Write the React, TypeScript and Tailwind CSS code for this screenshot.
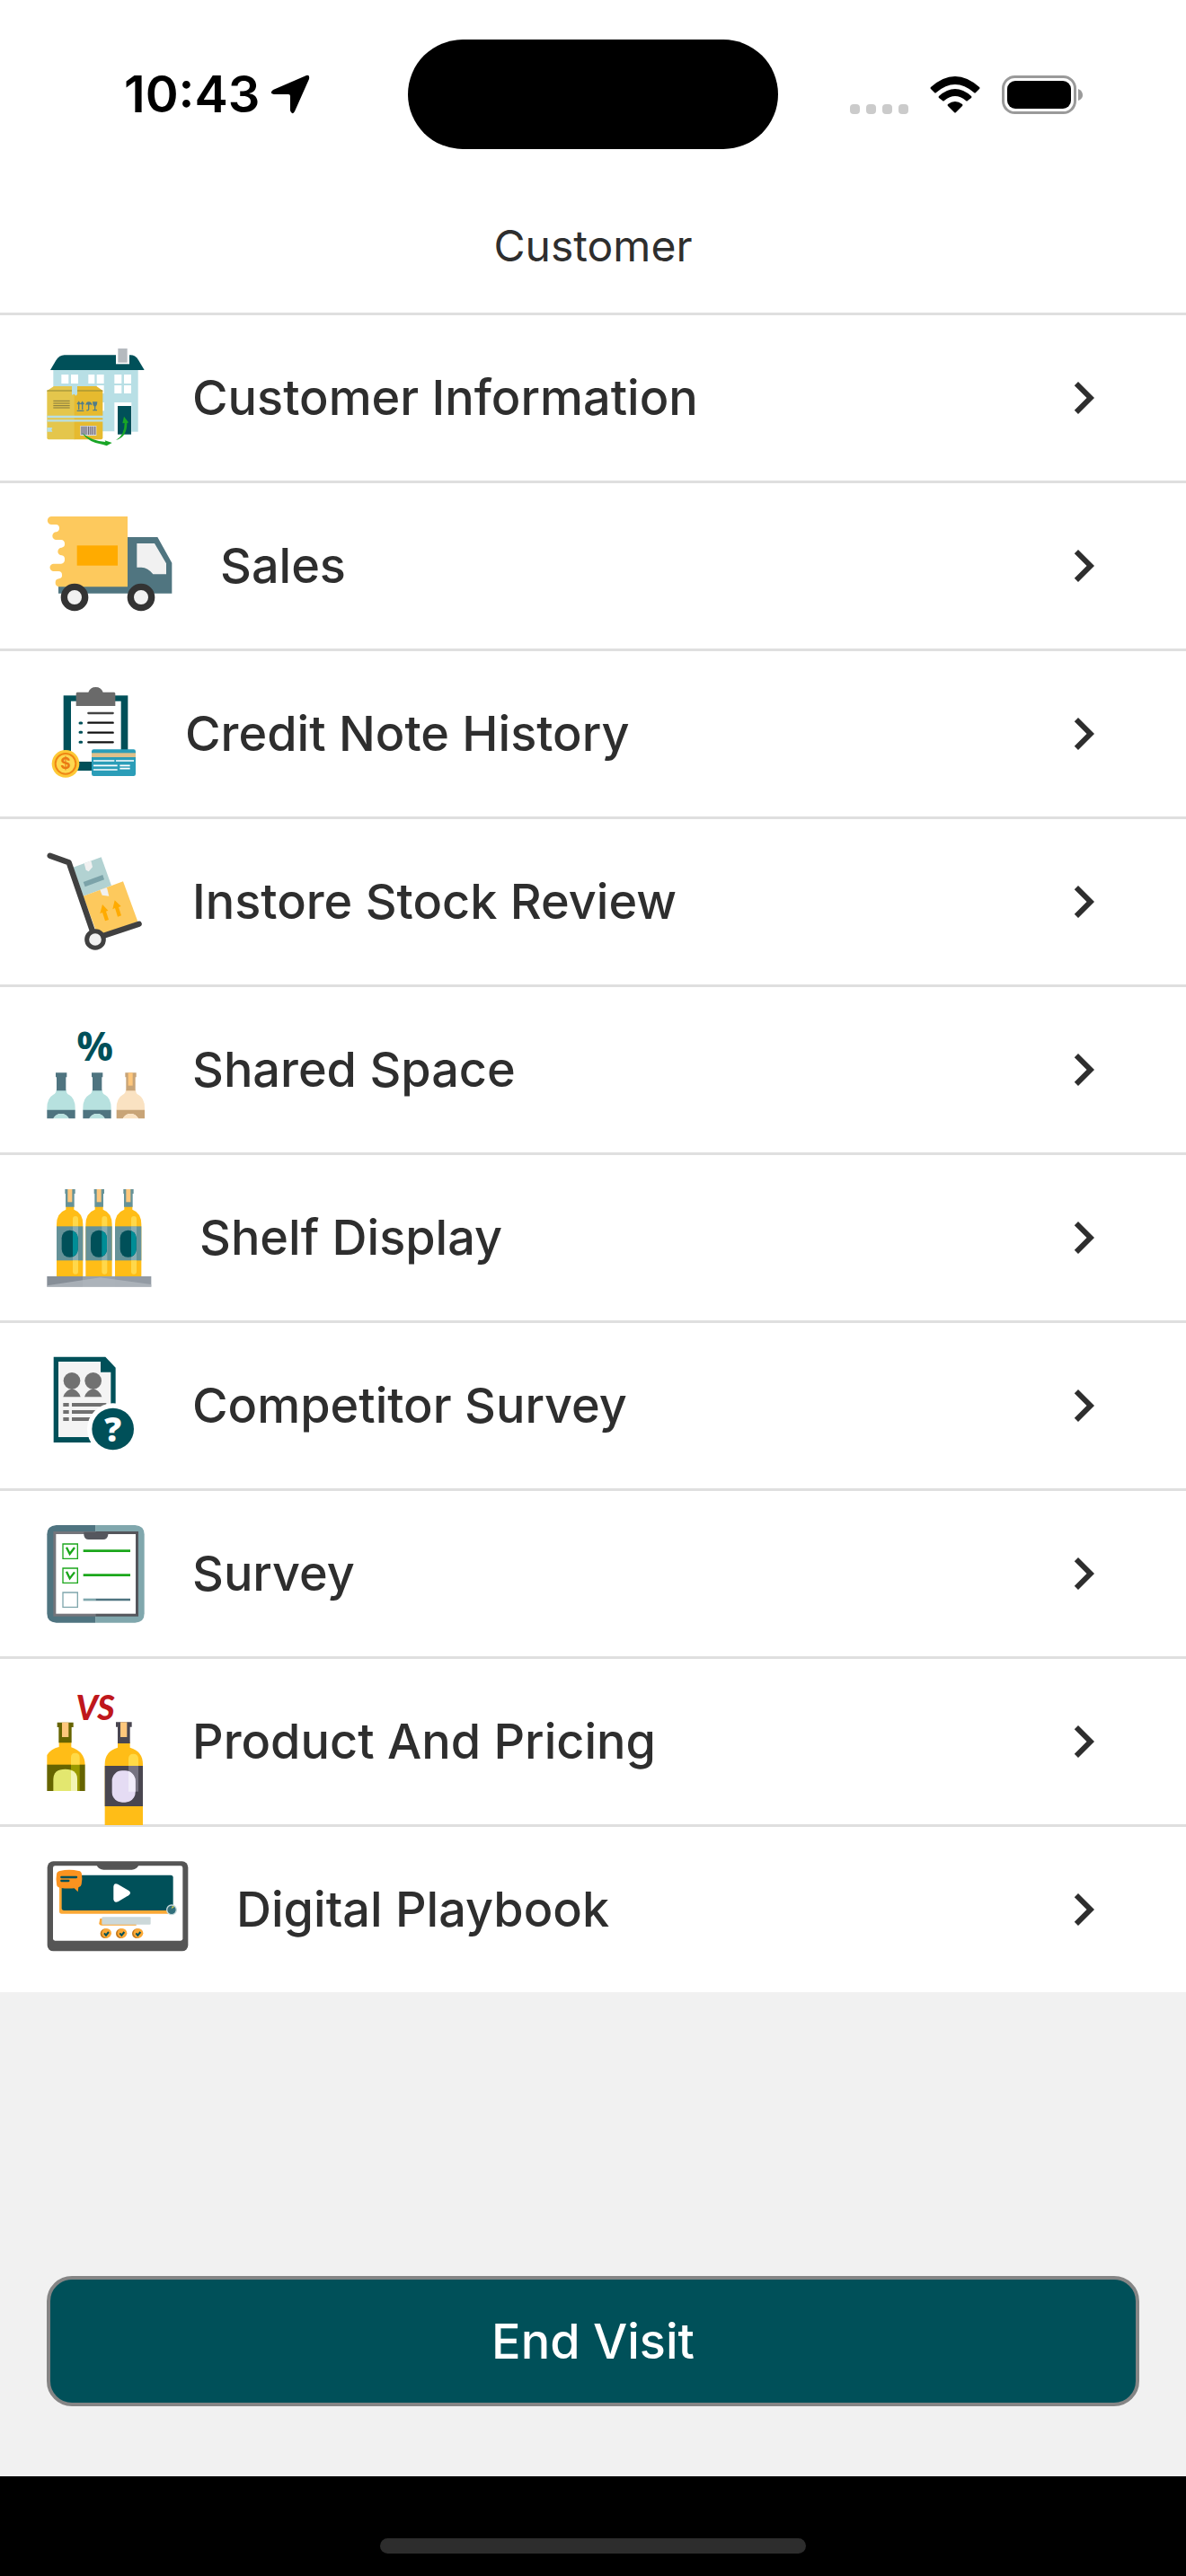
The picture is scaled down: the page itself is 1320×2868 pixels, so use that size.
import React, { type ReactNode } from "react";

const TEAL = "#005059";

/* ---------- Row pictograms ---------- */

function Pictogram({ viewBox, className, children }: { viewBox: string; className: string; children: ReactNode }) {
  return (
    <svg viewBox={viewBox} className={`h-28 shrink-0 overflow-visible ${className}`} aria-hidden="true">
      {children}
    </svg>
  );
}

function StoreIcon() {
  const panes = [
    [85, 141], [117, 141], [175, 141], [203, 141], [262, 141], [294, 141],
    [203, 177], [262, 177], [294, 177],
  ];
  return (
    <Pictogram viewBox="36 51 324 336" className="w-[108px]">
      <rect x="58" y="124" width="283" height="208" fill="#b8dfe5" />
      <path d="M48 126 L66 95 Q78 76 95 76 H315 Q332 76 342 92 L362 126Z" fill={TEAL} />
      <rect x="267" y="52" width="45" height="54" fill="#fff" />
      <rect x="274" y="54" width="31" height="47" fill="#b5babf" />
      {panes.map(([x, y]) => (
        <rect key={`${x}-${y}`} x={x} y={y} width={x < 200 && x > 170 ? 21 : 24} height={y === 141 ? 30 : 27} fill="#fff" />
      ))}
      <path d="M203 234 H228 V262 H203Z" fill="#fff" />
      <path d="M262 234 H319 V342 H262Z" fill="#fff" />
      <rect x="222" y="331" width="40" height="14" fill="#fff" />
      <rect x="273" y="246" width="45" height="95" fill={TEAL} />
      <path d="M37 195 L60 180 H130 V358 H42 Q37 358 37 352Z" fill="#e4c64c" />
      <path d="M128 180 H202 L223 195 V352 Q223 358 217 358 H128Z" fill="#e6ba2f" />
      <path d="M37 195 H223" stroke="#8f8634" strokeWidth="3" />
      <path d="M120 179 H138 V207 L133 212 L128 206 L120 209Z" fill="#b8dfe5" />
      <path d="M37 282 H228 M37 295 H228" stroke="#b8dfe5" strokeWidth="7" />
      <path d="M37 318 H55 L52 325 L55 332 H37Z" fill="#b8dfe5" />
      <path d="M58 229 H113 M58 237 H113 M58 245 H113 M58 252 H113" stroke="#81773e" strokeWidth="3" />
      <g stroke="#527d88" strokeWidth="4" fill="none">
        <path d="M143 235 V258 M155 235 V258 M137 262 H160 M138 240 L143 233 L148 240 M150 240 L155 233 L160 240" />
        <path d="M176 236 V257 Q175 262 169 260" />
        <path d="M197 246 V259 M190 260 H204" />
      </g>
      <path d="M166 244 Q167 232 176 232 Q187 232 187 244 L181 241 L176 244 L171 241Z M189 232 H205 Q204 248 197 248 Q190 248 189 232Z" fill="#527d88" />
      <rect x="148" y="312" width="54" height="33" fill="#d9dde4" />
      <path d="M150 314 H172 V342 H150Z" fill="#9393a2" />
      <path d="M176 314 V342 M183 314 V342 M190 314 V342 M197 314 V342" stroke="#6f6674" strokeWidth="4" />
      <path d="M153 335 Q185 362 232 366 L230 361 L254 369 L236 379 L224 375 Q176 368 153 335Z" fill="#18a526" />
      <path d="M267 360 Q296 344 296 303 L289 304 L294 281 L309 301 L304 304 Q304 350 267 360Z" fill="#18a526" />
    </Pictogram>
  );
}

function TruckIcon() {
  return (
    <Pictogram viewBox="36 42 417 336" className="w-[139px]">
      <path d="M75 270 H306 V114 H406 L454 200 V302 H75Z" fill="#507580" />
      <path
        d="M306 45 H52 A13 13 0 0 0 52 72 H66 A12 12 0 0 1 78 84 A13 13 0 0 1 68 97 A13 13 0 0 0 68 123 H84 A12 12 0 0 1 96 136 A12 12 0 0 1 86 149 A13 13 0 0 0 86 175 A13 13 0 0 1 96 189 A13 13 0 0 1 84 203 H59 A12 12 0 0 0 59 228 H75 A12 12 0 0 1 87 240 A12 12 0 0 1 77 253 A13 13 0 0 0 65 266 A13 13 0 0 0 78 280 H306Z"
        fill="#fdc95d"
      />
      <rect x="137" y="142" width="136" height="67" fill="#ffab00" />
      <path d="M337 135 H396 L435 202 V238 H391 Q374 215 352 215 H337Z" fill="#f1f1f1" />
      <circle cx="129" cy="315" r="35" fill="#f1f1f1" stroke="#333" strokeWidth="22" />
      <circle cx="351" cy="315" r="35" fill="#f1f1f1" stroke="#333" strokeWidth="22" />
    </Pictogram>
  );
}

function ClipboardCardIcon() {
  return (
    <Pictogram viewBox="36 33 300 336" className="w-[100px]">
      <rect x="92" y="73" width="215" height="251" fill={TEAL} />
      <rect x="117" y="92" width="167" height="202" fill="#fff" />
      <path d="M138 62 H175 A26 26 0 0 1 224 62 H261 Q265 62 265 67 V108 H134 V67 Q134 62 138 62Z" fill="#6a6a6a" />
      <path d="M175 132 H257" stroke="#444" strokeWidth="7" strokeLinecap="round" />
      <path d="M175 164 H257 M175 197 H257 M175 229 H257" stroke="#111" strokeWidth="7" strokeLinecap="round" />
      <path d="M147 165 H152 M147 196 H152 M147 229 H152" stroke={TEAL} strokeWidth="9" strokeLinecap="round" />
      <rect x="186" y="253" width="147" height="89" rx="7" fill="#2b9db8" />
      <rect x="186" y="265" width="147" height="14" fill="#dfc08a" />
      <path d="M192 291 H262 M267 291 H327 M192 307 H272 M192 321 H272 M280 307 H314 M280 317 H314" stroke="#fff" strokeWidth="5" />
      <circle cx="99" cy="301" r="46" fill="#fdc936" />
      <circle cx="99" cy="301" r="34" fill="#fdd850" stroke="#ef8614" strokeWidth="6" />
      <text x="99" y="319" fontSize="52" fontWeight="700" textAnchor="middle" fill="#ea7a13" fontFamily="Inter, sans-serif">$</text>
    </Pictogram>
  );
}

function TrolleyIcon() {
  return (
    <Pictogram viewBox="36 39 324 336" className="w-[108px]">
      <path d="M124 92 L218 58 L252 153 L159 188Z" fill="#b2d2d2" />
      <path d="M161 79 L184 70 L189 91 L176 106 L167 101Z" fill="#f1f1f1" />
      <path d="M158 141 L223 117 L228 133 L164 157Z" fill="#7ba3a9" />
      <path d="M158 188 L291 139 L340 273 L207 322Z" fill="#fdc95d" />
      <path d="M214 167 L237 160 L244 188 L221 185Z" fill="#f1f1f1" />
      <path d="M222 216 L241 236 L234 239 L243 267 L231 271 L222 243 L214 246Z M263 202 L284 222 L276 225 L285 253 L273 257 L264 228 L256 232Z" fill="#ffab00" />
      <path d="M47 53 L110 76 L188 302 M224 321 L344 281" fill="none" stroke="#404040" strokeWidth="19" strokeLinecap="round" strokeLinejoin="round" />
      <circle cx="198" cy="333" r="28" fill="#f1f1f1" stroke="#404040" strokeWidth="15" />
    </Pictogram>
  );
}

function RoundBottle({ x, glass, dark, cork }: { x: number; glass: string; dark: string; cork?: string }) {
  return (
    <g transform={`translate(${x} 0)`}>
      <path d="M31 265 H64 Q64 279 74 282 Q94 293 94 326 V334 H0 V326 Q0 293 20 282 Q31 277 31 265Z" fill={glass} />
      <path d="M29 208 H66 V223 H63 V268 H32 V223 H29Z" fill={dark} />
      {cork && <rect x="39" y="208" width="15" height="43" fill={cork} />}
      <path d="M0 332 H94 V361 H73 Q64 345 47 345 Q30 345 21 361 H0Z" fill={dark} />
      <path d="M21 361 Q30 345 47 345 Q64 345 73 361Z" fill={glass} />
    </g>
  );
}

function ShareIcon() {
  return (
    <Pictogram viewBox="36 30 324 336" className="w-[108px]">
      <text x="197" y="167" fontSize="136" fontWeight="700" textAnchor="middle" fill={TEAL} fontFamily="'Open Sans', sans-serif">%</text>
      <RoundBottle x={37} glass="#b7e1df" dark="#4f7480" />
      <RoundBottle x={157} glass="#b7e1df" dark="#4f7480" />
      <RoundBottle x={269} glass="#fae2c2" dark="#c8a477" cork="#fec77c" />
    </Pictogram>
  );
}

function ShelfIcon() {
  return (
    <Pictogram viewBox="36 36 348 336" className="w-[116px]">
      {[69, 166, 264].map((x) => (
        <g key={x} transform={`translate(${x} 0)`}>
          <path d="M31 98 H58 V110 Q88 121 88 160 V334 H0 V160 Q0 121 31 110Z" fill="#ffbd17" />
          <path d="M28 42 H62 V57 H59 V101 H30 V57 H28Z" fill="#659298" />
          <rect x="37" y="42" width="15" height="43" fill="#fec77c" />
          <rect x="0" y="166" width="88" height="114" fill="#659298" />
          <rect x="54" y="166" width="18" height="114" fill="#8aadb3" />
          <rect x="17" y="179" width="54" height="90" rx="26" fill={TEAL} />
          <path d="M54 181 Q71 188 71 206 V242 Q71 260 54 267Z" fill="#008d96" />
          <path d="M54 166 V142 Q54 132 63 132 Q72 132 72 142 V166Z M54 280 V317 Q54 326 63 326 Q72 326 72 317 V280Z" fill="#ffd84a" />
        </g>
      ))}
      <rect x="37" y="333" width="119" height="35" fill="#868e97" />
      <rect x="156" y="333" width="108" height="35" fill="#99a1a9" />
      <rect x="264" y="333" width="121" height="35" fill="#939ba4" />
      <path d="M37 364 L215 337 L385 360 V368 H37Z" fill="#b3b9c0" opacity="0.75" />
    </Pictogram>
  );
}

function CompetitorIcon() {
  return (
    <Pictogram viewBox="36 27 324 336" className="w-[108px]">
      <path d="M59 32 H232 L266 68 V318 H59Z" fill={TEAL} />
      <path d="M75 48 H216 V83 H250 V300 H75Z" fill="#f4f4f4" />
      {[120, 191].map((x) => (
        <g key={x} fill="#717171">
          <circle cx={x} cy="112" r="28" />
          <path d={`M${x - 29} 166 Q${x - 24} 145 ${x} 138 Q${x + 24} 145 ${x + 29} 166Z`} />
        </g>
      ))}
      <path d="M91 192 H110 M120 192 H235 M91 216 H110 M120 216 H205 M91 240 H110 M120 240 H195" stroke="#707070" strokeWidth="12" />
      <circle cx="257" cy="273" r="86" fill="#fff" />
      <circle cx="257" cy="273" r="70" fill={TEAL} />
      <text x="257" y="315" fontSize="112" fontWeight="800" textAnchor="middle" fill="#fff" fontFamily="'Open Sans', sans-serif">?</text>
    </Pictogram>
  );
}

function SurveyIcon() {
  return (
    <Pictogram viewBox="36 33 324 336" className="w-[108px]">
      <path d="M199 39 H331 Q362 41 362 70 V334 Q362 364 331 365 H199Z" fill="#80a7ad" />
      <path d="M199 39 H68 Q37 41 37 70 V334 Q37 364 68 365 H199Z" fill="#4f7480" />
      <rect x="58" y="60" width="141" height="284" fill="#74757b" />
      <rect x="199" y="60" width="143" height="284" fill="#54555b" />
      <rect x="67" y="69" width="266" height="266" fill="#fff" />
      <path d="M160 62 H241 V72 Q238 87 225 87 H176 Q162 87 160 72Z" fill="#55575e" />
      <g fill="none" stroke="#1ba71b">
        <path d="M90 102 H139 V151 H90Z M90 183 H139 V232 H90Z" strokeWidth="4" />
        <path d="M102 113 L113 135 L129 114 M102 194 L113 217 L129 196" strokeWidth="7" />
        <path d="M158 125 H315 M158 206 H315" strokeWidth="8" />
      </g>
      <path d="M90 264 H139 V313 H90Z" fill="none" stroke="#80a7ad" strokeWidth="4" />
      <path d="M158 288 H199" stroke="#80a7ad" strokeWidth="8" />
      <path d="M199 288 H315" stroke="#4f7480" strokeWidth="8" />
    </Pictogram>
  );
}

function VersusIcon() {
  return (
    <Pictogram viewBox="36 39 324 336" className="w-[108px]">
      <text x="198" y="134" fontSize="112" fontWeight="900" fontStyle="italic" textAnchor="middle" fill="#bf171c" fontFamily="Lato, sans-serif">VS</text>
      <path d="M77 210 H118 V226 Q164 242 164 285 H37 V252 Q50 231 77 225Z" fill="#ffbd17" />
      <path d="M71 143 H125 V159 H119 V211 H76 V159 H71Z" fill="#666400" />
      <rect x="87" y="143" width="22" height="49" fill="#fec77c" />
      <rect x="37" y="284" width="127" height="88" fill="#666400" />
      <rect x="117" y="284" width="29" height="88" fill="#9a9a00" />
      <path d="M58 372 V333 Q58 299 98 299 Q138 299 138 333 V372Z" fill="#e3e76f" />
      <path d="M117 303 Q138 310 138 333 V372 H117Z" fill="#f2f4b5" />
      <path d="M117 284 V260 Q117 245 131 245 Q146 245 146 260 V284Z" fill="#ffda47" />
      <path d="M273 209 H314 V227 Q357 239 357 283 V486 H230 V283 Q230 239 273 227Z" fill="#ffbd17" />
      <path d="M267 142 H320 V158 H314 V213 H273 V158 H267Z" fill="#494650" />
      <rect x="282" y="142" width="22" height="50" fill="#fec77c" />
      <rect x="230" y="288" width="127" height="135" fill="#494650" />
      <rect x="309" y="288" width="33" height="86" fill="#767381" />
      <rect x="254" y="304" width="78" height="106" rx="34" fill="#e5dcf4" />
      <path d="M309 307 Q332 315 332 341 V374 H309Z" fill="#f1edfa" />
      <path d="M309 288 V265 Q309 248 325 248 Q342 248 342 265 V288Z" fill="#ffda47" />
    </Pictogram>
  );
}

function PlaybookIcon() {
  return (
    <Pictogram viewBox="36 30 471 336" className="w-[157px]">
      <rect x="38" y="37" width="470" height="300" rx="20" fill="#555" />
      <rect x="57" y="52" width="433" height="250" rx="7" fill="#fff" />
      <path d="M203 50 H343 Q336 64 320 65 H226 Q209 64 203 50Z" fill="#555" />
      <path d="M78 100 H400 V212 H86 Q78 212 78 204Z M400 200 H442 V212 H400Z" fill="#fba836" />
      <rect x="86" y="83" width="372" height="118" rx="8" fill={TEAL} />
      <path d="M259 122 Q260 108 273 113 L309 134 Q321 142 309 151 L274 172 Q260 177 259 163Z" fill="#fff" />
      <path d="M80 69 Q111 62 143 69 Q152 70 153 81 Q156 97 152 114 Q151 121 142 124 L140 139 L128 127 Q104 129 79 125 Q69 123 69 112 Q66 96 69 80 Q70 71 80 69Z" fill="#fb931f" />
      <path d="M85 90 H135 M85 102 H109" stroke={TEAL} strokeWidth="7" strokeLinecap="round" />
      <circle cx="453" cy="199" r="16" fill="#316f7b" stroke="#c9dadb" strokeWidth="4" />
      <path d="M452 196 L456 186 L462 189Z" fill="#dfd64b" />
      <path d="M214 228 H335 V251 H220 Q211 251 211 244Z" fill="#fba836" />
      <rect x="220" y="223" width="163" height="25" rx="3" fill="#ccd8d9" />
      {[236, 288, 342].map((x) => (
        <g key={x}>
          <ellipse cx={x - 5} cy="278" rx="16" ry="16" fill="#c1761b" />
          <ellipse cx={x} cy="277" rx="16" ry="16" fill="#fba836" />
          <path d={`M${x - 8} 277 L${x - 2} 284 L${x + 7} 273`} fill="none" stroke={TEAL} strokeWidth="6" />
        </g>
      ))}
    </Pictogram>
  );
}

/* ---------- Status bar ---------- */

function StatusBar() {
  return (
    <div className="grid grid-cols-[1fr_412px_1fr] items-center pt-11 text-black">
      <div className="flex items-center gap-3 pl-[138px]">
        <span className="text-[56px] leading-none font-semibold">10:43</span>
        <svg viewBox="0 0 44 44" className="size-11" aria-hidden="true">
          <path d="M40 1 Q44 0 43 5 L27 41 Q24 46 22 40 V24 Q22 22 20 22 H4 Q-2 21 3 17Z" fill="currentColor" />
        </svg>
      </div>
      <div className="h-[122px] rounded-full bg-black" />
      <div className="flex items-end justify-end gap-6 pr-[115px]">
        <div className="flex gap-[7px]">
          <span className="size-[11px] rounded-[4px] bg-[#cbcbcb]" />
          <span className="size-[11px] rounded-[4px] bg-[#cbcbcb]" />
          <span className="size-[11px] rounded-[4px] bg-[#cbcbcb]" />
          <span className="size-[11px] rounded-[4px] bg-[#cbcbcb]" />
        </div>
        <svg viewBox="0 0 56 43" className="h-[43px] w-14" aria-hidden="true">
          <path d="M1 13 Q28 -11 55 13 Q56 14 55 15 L51 19 Q50 20 49 19 Q28 1 7 19 Q6 20 5 19 L1 15 Q0 14 1 13Z" />
          <path d="M10 23 Q28 7 46 23 Q47 24 46 25 L42 28 Q41 29 40 28 Q28 18 16 28 Q15 29 14 28 L10 25 Q9 24 10 23Z" />
          <path d="M20 32 Q28 26 36 32 Q37 33 36 34 L29 41 Q28 42 27 41 L20 34 Q19 33 20 32Z" />
        </svg>
        <svg viewBox="0 0 90 43" className="h-[43px] w-[90px]" aria-hidden="true">
          <rect x="1.5" y="1.5" width="80" height="40" rx="13" fill="none" stroke="#9a9a9a" strokeWidth="3" />
          <path d="M85 15 Q90 17 90 22 Q90 26 85 28Z" fill="#9a9a9a" />
          <rect x="6" y="6" width="71" height="31" rx="9" fill="#000" />
        </svg>
      </div>
    </div>
  );
}

/* ---------- Menu ---------- */

const MENU: { label: string; icon: ReactNode }[] = [
  { label: "Customer Information", icon: <StoreIcon /> },
  { label: "Sales", icon: <TruckIcon /> },
  { label: "Credit Note History", icon: <ClipboardCardIcon /> },
  { label: "Instore Stock Review", icon: <TrolleyIcon /> },
  { label: "Shared Space", icon: <ShareIcon /> },
  { label: "Shelf Display", icon: <ShelfIcon /> },
  { label: "Competitor Survey", icon: <CompetitorIcon /> },
  { label: "Survey", icon: <SurveyIcon /> },
  { label: "Product And Pricing", icon: <VersusIcon /> },
  { label: "Digital Playbook", icon: <PlaybookIcon /> },
];

export default function App() {
  return (
    <div className="flex min-h-screen flex-col bg-[#f1f1f1] font-['Inter',sans-serif] text-[#2e2e2e]">
      <header className="bg-white">
        <StatusBar />
        <h1 className="pt-20 pb-[46px] text-center text-[48px] leading-14 font-normal">Customer</h1>
      </header>

      <nav aria-label="Customer menu">
        <ul>
          {MENU.map(({ label, icon }) => (
            <li key={label}>
              <a href="#" className="flex items-center gap-[54px] border-t-3 border-[#dfdfdf] bg-white py-9 pr-[78px] pl-[52px]">
                {icon}
                <span className="flex-1 text-[54px] leading-16 font-medium">{label}</span>
                <svg viewBox="0 0 24 24" className="size-18 shrink-0" fill="currentColor" aria-hidden="true">
                  <path d="M10 6 8.59 7.41 13.17 12l-4.58 4.59L10 18l6-6z" />
                </svg>
              </a>
            </li>
          ))}
        </ul>
      </nav>

      <footer className="mt-auto">
        <div className="px-[52px] pb-[78px]">
          <button type="button" className="w-full rounded-[28px] border-4 border-[#858585] bg-[#005059] py-9 text-[54px] leading-[65px] font-medium text-white">
            End Visit
          </button>
        </div>
        <div className="flex justify-center bg-black pt-[69px] pb-[25px]">
          <div className="h-[17px] w-[474px] rounded-full bg-[#2d2d2d]" />
        </div>
      </footer>
    </div>
  );
}
